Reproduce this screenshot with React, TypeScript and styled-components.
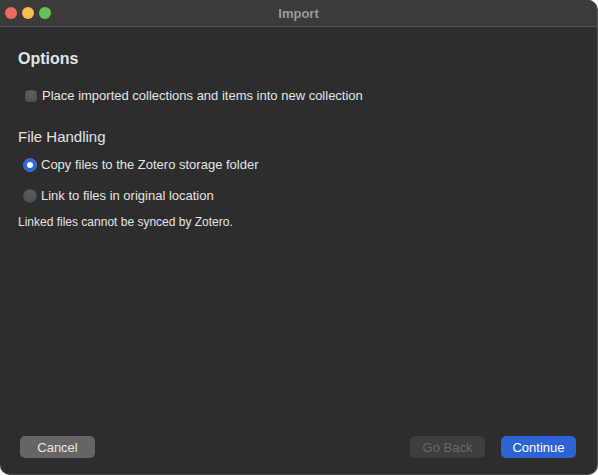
import React from "react";
import styled, { createGlobalStyle } from "styled-components";

const GlobalStyle = createGlobalStyle`
  html, body {
    margin: 0;
    padding: 0;
    background: #ffffff;
  }
  body {
    font-family: "Liberation Sans", Arial, sans-serif;
  }
`;

const Window = styled.div`
  width: 598px;
  height: 475px;
  box-sizing: border-box;
  display: flex;
  flex-direction: column;
  background: #2d2d2d;
  border-right: 1px solid #5c5c5c;
  border-bottom: 1px solid #4a4a4a;
  border-radius: 0 10px 10px 10px;
  overflow: hidden;
`;

const TitleBar = styled.div`
  height: 26px;
  flex-shrink: 0;
  display: flex;
  align-items: center;
  position: relative;
  background: #3c3b39;
  border-bottom: 1px solid #555452;
`;

const Lights = styled.div`
  display: flex;
  gap: 5px;
  padding-left: 5px;
`;

const Light = styled.span<{ $color: string }>`
  width: 12px;
  height: 12px;
  border-radius: 50%;
  background: ${(p) => p.$color};
`;

const Title = styled.div`
  position: absolute;
  left: 0;
  right: 0;
  text-align: center;
  font-size: 13px;
  font-weight: bold;
  color: #9b9a99;
`;

const Body = styled.div`
  flex: 1;
  display: flex;
  flex-direction: column;
  padding: 22px 18px 0 18px;
  color: #e4e4e4;
`;

const Heading = styled.div`
  font-size: 16px;
  font-weight: bold;
  line-height: 19px;
`;

const Subheading = styled.div`
  font-size: 15px;
  line-height: 18px;
  margin-top: 24px;
`;

const OptionRow = styled.label<{ $indent: number; $top: number }>`
  display: flex;
  align-items: center;
  gap: 4px;
  margin-left: ${(p) => p.$indent}px;
  margin-top: ${(p) => p.$top}px;
  font-size: 13px;
  line-height: 16px;
`;

const Check = styled.span`
  width: 12px;
  height: 12px;
  box-sizing: border-box;
  border-radius: 3px;
  background: linear-gradient(#5e5e5e, #535353);
  border: 1px solid #4e4e4e;
  margin-right: 1px;
`;

const Radio = styled.span<{ $on?: boolean }>`
  width: 14px;
  height: 14px;
  box-sizing: border-box;
  border-radius: 50%;
  display: flex;
  align-items: center;
  justify-content: center;
  background: ${(p) => (p.$on ? "#2e6ad6" : "linear-gradient(#5c5c5c, #505050)")};
  border: 1px solid ${(p) => (p.$on ? "#3b74dc" : "#4d4d4d")};
  &::after {
    content: "";
    display: ${(p) => (p.$on ? "block" : "none")};
    width: 6px;
    height: 6px;
    border-radius: 50%;
    background: #ffffff;
  }
`;

const Note = styled.div`
  font-size: 12px;
  line-height: 14px;
  margin-top: 11px;
`;

const Footer = styled.div`
  flex-shrink: 0;
  display: flex;
  align-items: center;
  gap: 16px;
  padding: 0 21px 16px 20px;
`;

const Spacer = styled.div`
  flex: 1;
`;

const Button = styled.button<{ $kind: "normal" | "disabled" | "primary" }>`
  width: 75px;
  height: 22px;
  border: none;
  border-radius: 5px;
  font-family: "Liberation Sans", Arial, sans-serif;
  font-size: 13px;
  padding: 0;
  background: ${(p) =>
    p.$kind === "primary" ? "#2d63d5" : p.$kind === "disabled" ? "#3e3e3e" : "#656565"};
  color: ${(p) =>
    p.$kind === "primary" ? "#ffffff" : p.$kind === "disabled" ? "#6a6a6a" : "#e6e6e6"};
`;

export default function App() {
  return (
    <>
      <GlobalStyle />
      <Window>
        <TitleBar>
          <Lights>
            <Light $color="#ed6a5e" />
            <Light $color="#f5bf4f" />
            <Light $color="#61c554" />
          </Lights>
          <Title>Import</Title>
        </TitleBar>
        <Body>
          <Heading>Options</Heading>
          <OptionRow $indent={7} $top={20}>
            <Check />
            Place imported collections and items into new collection
          </OptionRow>
          <Subheading>File Handling</Subheading>
          <OptionRow $indent={5} $top={11}>
            <Radio $on />
            Copy files to the Zotero storage folder
          </OptionRow>
          <OptionRow $indent={5} $top={15}>
            <Radio />
            Link to files in original location
          </OptionRow>
          <Note>Linked files cannot be synced by Zotero.</Note>
        </Body>
        <Footer>
          <Button $kind="normal">Cancel</Button>
          <Spacer />
          <Button $kind="disabled">Go Back</Button>
          <Button $kind="primary">Continue</Button>
        </Footer>
      </Window>
    </>
  );
}
